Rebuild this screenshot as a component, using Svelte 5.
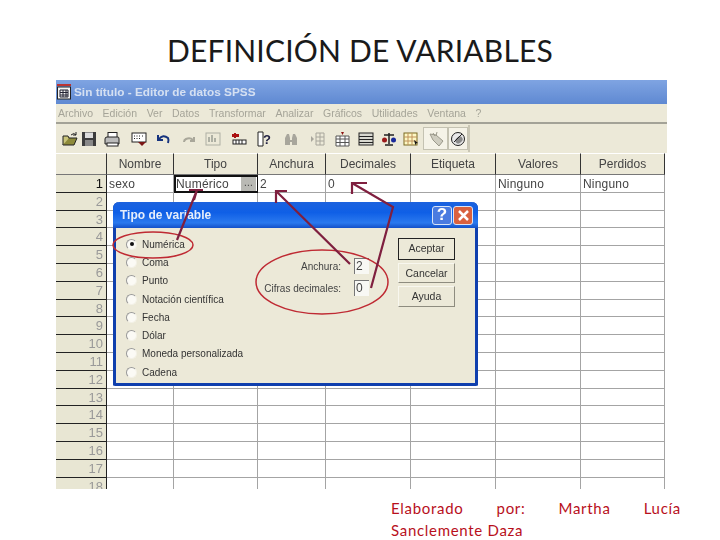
<script>
  const centres = [72, 91, 114, 143, 169, 190, 217, 243, 266, 295, 323, 345, 370, 393, 413, 440, 463];
  const glyphs = [
    '<path d="M1 14 L4 7 H15 L12 14Z" fill="#8d8a3a" stroke="#222"/><path d="M1 14V5h5l1 2" fill="#c9c47a" stroke="#222"/><path d="M9 4q3-3 5 0M14 1v3h-3" fill="none" stroke="#222"/>',
    '<rect x="1" y="1" width="14" height="14" fill="#3c3c3c"/><rect x="4" y="1.500" width="8" height="5.500" fill="#dcdcdc"/><rect x="4" y="9" width="8" height="6" fill="#888"/>',
    '<rect x="4" y="1.500" width="9" height="5" fill="#fff" stroke="#222"/><path d="M1 8q0-2 2-2h11q1 0 1 2v5H1Z" fill="#bbb" stroke="#222"/><rect x="3" y="12" width="11" height="3" fill="#fff" stroke="#222"/>',
    '<rect x="1" y="2" width="14" height="9" fill="#fff" stroke="#222"/><path d="M3 5h1M5.500 5h1M8 5h1M11 5h1M3 7.500h1M5.500 7.500h1M8 7.500h1" stroke="#222"/><path d="M7 11h8l-4 4Z" fill="#7a1515"/>',
    '<path d="M2 4v5h5M3 8q4-5 9-1q1 2 0 5" fill="none" stroke="#16337e" stroke-width="2"/>',
    '<path d="M14 6v4h-4M13 9q-3-3-7-1q-2 1-2 3" fill="none" stroke="#a9a79a" stroke-width="2"/>',
    '<rect x="1" y="2" width="14" height="12" fill="none" stroke="#aeb0a4"/><path d="M4 11V6M7 11V4M10 11V7" stroke="#aeb0a4" stroke-width="2"/>',
    '<path d="M1 3h7v3H1Z" fill="#a11"/><path d="M4 2v5" stroke="#a11" stroke-width="2"/><rect x="2" y="9" width="13" height="4" fill="#fff" stroke="#222"/><path d="M5 9v4M8 9v4M11 9v4" stroke="#222"/>',
    '<path d="M2 1h5v14H2Z" fill="#fff" stroke="#222"/><text x="7" y="13" font-family="Liberation Sans" font-weight="700" font-size="13" fill="#224">?</text>',
    '<path d="M2 14V7l2-4h2l1 4v2h2V7l1-4h2l2 4v7h-5v-3H7v3Z" fill="#a8a69c"/>',
    '<path d="M1 5l3 3-3 3Z" fill="#a8a69c"/><path d="M6 2h8v12H6ZM6 6h8M6 10h8M10 2v12" fill="none" stroke="#a8a69c"/>',
    '<path d="M2 5h13v10H2ZM2 8h13M2 11.500h13M6 5v10M11 5v10" fill="#fff" stroke="#555"/><path d="M7 1h3l-1.500 3Z" fill="#8b1111"/>',
    '<rect x="1" y="2" width="14" height="12" fill="#d8d8d0" stroke="#222"/><path d="M1 5.500h14M1 8.500h14M1 11.500h14" stroke="#222"/>',
    '<path d="M8 2v11M3 4h10M4 14h8" stroke="#222" stroke-width="1.500"/><circle cx="3.500" cy="9" r="2.500" fill="#9a1a1a"/><circle cx="12.500" cy="9" r="2.500" fill="#1a2a9a"/>',
    '<rect x="1" y="2" width="13" height="12" fill="#fdf8c4" stroke="#7a6a20"/><path d="M1 6h13M1 10h13M5 2v12M9 2v12" stroke="#c0925a"/><path d="M11 9l4 3-2 .5-.5 2Z" fill="#111"/>',
    '<path d="M2 3l6 1 7 6-4 5-6-6Z" fill="#cfcdc0" stroke="#9a988a"/><path d="M5 2l2 3M9 1l-1 4" stroke="#9a988a"/>',
    '<circle cx="8" cy="8" r="6.500" fill="#e8e8e8" stroke="#222"/><ellipse cx="9" cy="9" rx="4" ry="3" fill="#8a8a8a" transform="rotate(-40 9 9)"/><path d="M4 11l8-8" stroke="#222"/>'
  ];
  const tools = centres.map((c, i) => ({
    width: ((centres[i + 1] ?? c + 17) - (centres[i - 1] ?? c - 15)) / 2,
    svg: glyphs[i],
    raised: i === 15 || i === 16
  }));
  const menu = ['Archivo', 'Edición', 'Ver', 'Datos', 'Transformar', 'Analizar', 'Gráficos', 'Utilidades', 'Ventana', '?'];
  const heads = ['Nombre', 'Tipo', 'Anchura', 'Decimales', 'Etiqueta', 'Valores', 'Perdidos'];
  const rows = Array.from({ length: 18 }, (_, i) => i + 1);
  const types = ['Numérica', 'Coma', 'Punto', 'Notación científica', 'Fecha', 'Dólar', 'Moneda personalizada', 'Cadena'];
</script>

<div class="page">
  <h1>DEFINICIÓN DE VARIABLES</h1>

  <div class="win">
    <div class="titlebar">
      <svg width="14" height="16" viewBox="0 0 14 16">
        <rect x="0.500" y="3" width="13" height="12" fill="#f4f4f4" stroke="#222" />
        <path d="M0 1h14" stroke="#b33" stroke-width="2" />
        <path d="M3 6h8v7H3ZM3 8.500h8M3 11h8M6 6v7M9 6v7" fill="none" stroke="#223" />
      </svg>
      <span>Sin título - Editor de datos SPSS</span>
    </div>
    <div class="menu">
      {#each menu as m}<span>{m}</span>{/each}
    </div>
    <div class="tools">
      <div class="tool-set">
        {#each tools as t}
          <div class="tool" class:raised={t.raised} style="width:{t.width}px">
            <svg width="16" height="16" viewBox="0 0 16 16">{@html t.svg}</svg>
          </div>
        {/each}
      </div>
    </div>
    <div class="grid">
      <div class="hd corner"></div>
      {#each heads as h}<div class="hd">{h}</div>{/each}
      {#each rows as r}
        <div class="rn" class:on={r === 1}>{r}</div>
        <div class="c">{r === 1 ? 'sexo' : ''}</div>
        <div class="c" class:sel={r === 1}>
          {#if r === 1}Numérico<span class="dots">...</span>{/if}
        </div>
        <div class="c">{r === 1 ? '2' : ''}</div>
        <div class="c">{r === 1 ? '0' : ''}</div>
        <div class="c"></div>
        <div class="c">{r === 1 ? 'Ninguno' : ''}</div>
        <div class="c">{r === 1 ? 'Ninguno' : ''}</div>
      {/each}
    </div>

    <div class="dialog">
      <div class="dtitle">
        <span>Tipo de variable</span>
        <div class="dbtn help">?</div>
        <div class="dbtn close">
          <svg width="13" height="13" viewBox="0 0 13 13"><path d="M2 2l9 9M11 2l-9 9" stroke="#fff" stroke-width="2.500" /></svg>
        </div>
      </div>
      <div class="dbody">
        <div class="radios">
          {#each types as t, i}
            <div class="radio">
              <i class:dot={i === 0}></i>{t}
            </div>
          {/each}
        </div>
        <div class="fields">
          <label>Anchura:<b>2</b></label>
          <label>Cifras decimales:<b>0</b></label>
        </div>
        <div class="btns">
          <div class="btn def">Aceptar</div>
          <div class="btn short">Cancelar</div>
          <div class="btn">Ayuda</div>
        </div>
      </div>
    </div>
  </div>

  <p class="foot">Elaborado por: Martha Lucía Sanclemente Daza</p>

  <svg class="marks" width="720" height="540" viewBox="0 0 720 540">
    <ellipse cx="153" cy="245" rx="40" ry="13" class="ring" />
    <ellipse cx="322" cy="282" rx="66" ry="32" class="ring" />
    <path class="arrow" d="M177 240L197 190M189 190H203M197 190L194 200" />
    <path class="arrow" d="M350 264L277 192M287 191H276V203" />
    <path class="arrow" d="M371 288L393 207L352 183M367 183H352V194" />
  </svg>
</div>

<style>
  :global(body) { background: #fff; }
  .page {
    position: relative;
    width: 720px;
    height: 540px;
    overflow: hidden;
    font-family: "Liberation Sans", sans-serif;
  }
  h1 {
    margin: 0;
    height: 80px;
    box-sizing: border-box;
    padding-top: 28px;
    text-align: center;
    font: 400 30px/44px Lato, sans-serif;
    letter-spacing: 0.200px;
    color: #1a1a1a;
  }
  .win {
    position: relative;
    width: 611px;
    height: 409px;
    margin-left: 56px;
    overflow: hidden;
    background: #fff;
    color: #333;
    font-size: 12px;
    filter: blur(0.350px);
  }
  .titlebar {
    height: 24px;
    display: flex;
    align-items: center;
    gap: 3px;
    padding-left: 1px;
    background: linear-gradient(#7fa4e2, #5f89d2);
    color: #d5e0f2;
    font-weight: 700;
    font-size: 11.800px;
  }
  .menu {
    height: 20px;
    box-sizing: border-box;
    display: flex;
    align-items: center;
    gap: 9.600px;
    padding-left: 2px;
    background: #ece9d8;
    border-bottom: 2px solid #a3a297;
    color: #a5a498;
    font-size: 10.500px;
  }
  .tools {
    height: 29px;
    background: #ece9d8;
    display: flex;
    align-items: center;
    padding-left: 5px;
    box-sizing: border-box;
  }
  .tool-set {
    display: flex;
    height: 27px;
    align-items: center;
    border-right: 2px solid #c9c6b4;
  }
  .tool {
    height: 23px;
    display: flex;
    align-items: center;
    justify-content: center;
    box-sizing: border-box;
  }
  .raised {
    background: #f5f3e8;
    border: 1px solid #c4c2b2;
  }
  .grid {
    display: grid;
    grid-template-columns: 51px 67px 84px 68px 85px 85px 85px 84px;
    grid-template-rows: 22px;
    grid-auto-rows: 17.800px;
    width: 609px;
  }
  .hd {
    background: #ece9d8;
    border-right: 1.500px solid #333;
    border-bottom: 1px solid #777;
    border-top: 1px solid #fff;
    text-align: center;
    line-height: 21px;
    box-sizing: border-box;
    color: #444;
  }
  .rn {
    background: #e8e6d3;
    border-right: 1.500px solid #222;
    border-bottom: 1.500px solid #222;
    text-align: right;
    padding-right: 3px;
    box-sizing: border-box;
    font-size: 13px;
    line-height: 18px;
    color: #999;
  }
  .rn.on { color: #111; }
  .c {
    position: relative;
    border-right: 1px solid #a4a4a4;
    border-bottom: 1px solid #a4a4a4;
    box-sizing: border-box;
    padding-left: 2px;
    line-height: 18px;
    color: #444;
    letter-spacing: 0.200px;
  }
  .c.sel {
    border: 2px solid #111;
    border-right-width: 1px;
    padding-left: 0;
    line-height: 15px;
  }
  .dots {
    position: absolute;
    right: 1px;
    top: 0;
    bottom: 0;
    width: 15px;
    background: #b9b9b4;
    text-align: center;
    font-size: 10px;
    line-height: 11px;
  }
  .dialog {
    position: absolute;
    left: 57px;
    top: 122px;
    width: 365px;
    height: 184px;
    box-sizing: border-box;
    background: #ece9d8;
    border: 3px solid #0f3fae;
    border-top: 0;
    border-radius: 6px 6px 2px 2px;
    color: #333;
    display: flex;
    flex-direction: column;
  }
  .dtitle {
    height: 26px;
    margin: 0 -3px;
    padding: 0 5px 0 7px;
    display: flex;
    align-items: center;
    gap: 1px;
    border-radius: 6px 6px 0 0;
    background: linear-gradient(#1c62de, #0f5fe6 40%, #2a79ee 80%, #1350c8);
    color: #e6eefb;
    font-weight: 700;
  }
  .dtitle span { flex: 1; }
  .dbtn {
    width: 20px;
    height: 19px;
    box-sizing: border-box;
    border: 1px solid #d9e4f7;
    border-radius: 3px;
    display: flex;
    align-items: center;
    justify-content: center;
    color: #fff;
    font-size: 17px;
    font-weight: 700;
  }
  .help { background: #4a7be0; }
  .close { background: #d9613f; }
  .dbody {
    flex: 1;
    display: flex;
    padding: 7px 0 0 10px;
  }
  .radios {
    width: 130px;
    flex: none;
    display: flex;
    flex-direction: column;
    font-size: 10px;
    white-space: nowrap;
  }
  .radio {
    height: 18.300px;
    flex: none;
    display: flex;
    align-items: center;
    gap: 5px;
    color: #333;
  }
  .radio i {
    position: relative;
    flex: none;
    width: 11px;
    height: 11px;
    border-radius: 50%;
    background: #fbfaf5;
    border: 1px solid #f3f1e6;
    border-top-color: #999;
    border-left-color: #999;
    box-sizing: border-box;
  }
  .radio i.dot::after {
    content: "";
    position: absolute;
    left: 2.500px;
    top: 2.500px;
    width: 4px;
    height: 4px;
    border-radius: 50%;
    background: #111;
  }
  .fields {
    width: 113px;
    flex: none;
    padding-top: 23px;
    box-sizing: border-box;
    display: flex;
    flex-direction: column;
    gap: 6px;
    font-size: 10px;
    color: #444;
  }
  .fields label {
    height: 16px;
    display: flex;
    justify-content: flex-end;
    align-items: center;
    white-space: nowrap;
  }
  .fields b {
    width: 15px;
    height: 16px;
    margin-left: 13px;
    flex: none;
    box-sizing: border-box;
    background: #f8f8f4;
    border-top: 1px solid #777;
    border-left: 1px solid #777;
    font-weight: 400;
    font-size: 12px;
    line-height: 14px;
    padding-left: 1px;
  }
  .btns {
    margin-left: 29px;
    display: flex;
    flex-direction: column;
    padding-top: 3px;
    gap: 3px;
  }
  .btn {
    width: 57px;
    height: 21px;
    box-sizing: border-box;
    background: #ece9d8;
    border: 1px solid #f8f7ef;
    border-right-color: #8e8c7f;
    border-bottom-color: #8e8c7f;
    text-align: center;
    line-height: 19px;
    font-size: 10.500px;
    color: #333;
  }
  .btn.def {
    height: 22px;
    border: 1.500px solid #222;
  }
  .btn.short { height: 20px; }
  .foot {
    width: 290px;
    margin: 8px 0 0 391px;
    font: 400 15px/22px Lato, sans-serif;
    letter-spacing: 0.700px;
    color: #b8101c;
    text-align: justify;
  }
  .marks {
    position: absolute;
    left: 0;
    top: 0;
    pointer-events: none;
  }
  .ring {
    fill: none;
    stroke: #bf2a33;
    stroke-width: 1.500;
  }
  .arrow {
    fill: none;
    stroke: #7f1f3f;
    stroke-width: 2.200;
  }
</style>
